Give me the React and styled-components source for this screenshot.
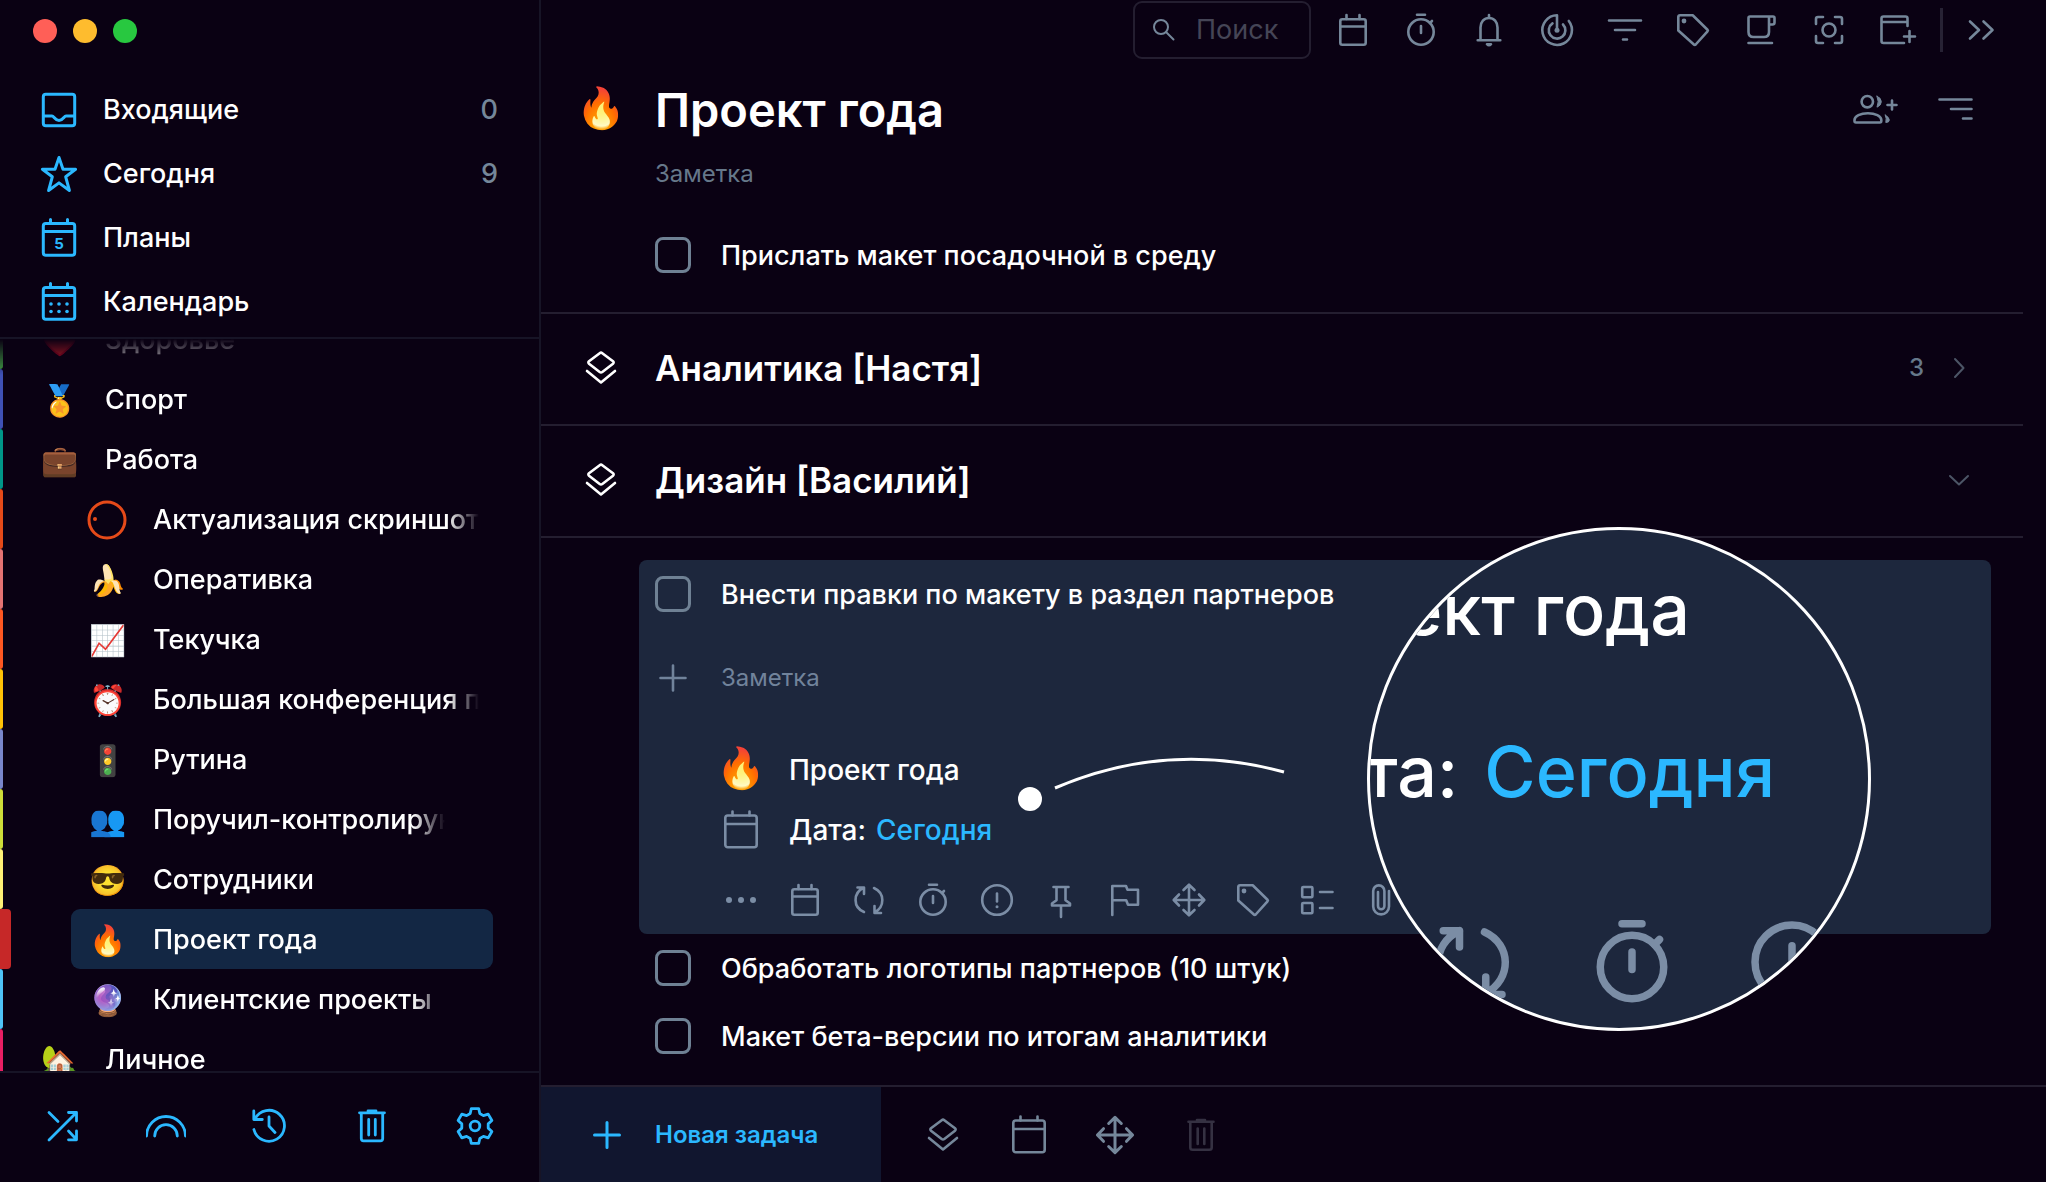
import { useState } from "react";
import styled, { createGlobalStyle } from "styled-components";

const navItems = [
  { icon: "inbox", label: "Входящие", count: 0 },
  { icon: "star", label: "Сегодня", count: 9 },
  { icon: "calendarDay", label: "Планы" },
  { icon: "calendarDots", label: "Календарь" },
];

const projects = [
  { name: "Здоровье", emoji: "♥️", color: "#43a047" },
  { name: "Спорт", emoji: "🏅", color: "#3f51b5" },
  { name: "Работа", emoji: "💼", color: "#009688" },
  { name: "Актуализация скриншотов", ring: true, color: "#e64a19", child: true },
  { name: "Оперативка", emoji: "🍌", color: "#e57373", child: true },
  { name: "Текучка", emoji: "📈", color: "#ff5722", child: true },
  { name: "Большая конференция по", emoji: "⏰", color: "#ffc107", child: true },
  { name: "Рутина", emoji: "🚦", color: "#7986cb", child: true },
  { name: "Поручил-контролирую", emoji: "👥", color: "#cddc39", child: true, short: true },
  { name: "Сотрудники", emoji: "😎", color: "#fff176", child: true },
  { name: "Проект года", emoji: "🔥", color: "#c62828", child: true },
  { name: "Клиентские проекты", emoji: "🔮", color: "#4fc3f7", child: true, short: true },
  { name: "Личное", emoji: "🏡", color: "#e91e63" },
];

const sideTools = [
  { icon: "shuffle", label: "Перемешать" },
  { icon: "rainbow", label: "Радуга" },
  { icon: "history", label: "История" },
  { icon: "trash", label: "Корзина" },
  { icon: "gear", label: "Настройки" },
];

const topTools = [
  { icon: "calendar", label: "Календарь" },
  { icon: "stopwatch", label: "Таймер" },
  { icon: "bell", label: "Напоминания" },
  { icon: "radar", label: "Радар" },
  { icon: "filter", label: "Фильтр" },
  { icon: "tag", label: "Теги" },
  { icon: "cup", label: "Перерыв" },
  { icon: "focus", label: "Фокус" },
  { icon: "windowPlus", label: "Новое окно" },
];

const taskTools = [
  { icon: "dots", label: "Ещё" },
  { icon: "calendar", label: "Дата" },
  { icon: "repeat", label: "Повтор" },
  { icon: "stopwatch", label: "Время" },
  { icon: "alert", label: "Важность" },
  { icon: "pin", label: "Закрепить" },
  { icon: "flag", label: "Флаг" },
  { icon: "move", label: "Переместить" },
  { icon: "tag", label: "Теги" },
  { icon: "checklist", label: "Список" },
  { icon: "clip", label: "Вложение" },
];

// six rounded teeth around the centre of a 40px box
const gearPath =
  "M" +
  Array.from({ length: 6 })
    .flatMap((_, i) =>
      [
        [17.8, -12],
        [17.8, 12],
        [13.4, 21],
        [13.4, 39],
      ].map(([r, a]) => {
        const rad = ((i * 60 + a - 90) * Math.PI) / 180;
        return `${(20 + r * Math.cos(rad)).toFixed(1)} ${(20 + r * Math.sin(rad)).toFixed(1)}`;
      }),
    )
    .join("L") +
  "Z";

const dot = { fill: "currentColor", stroke: "none" };

const icons = {
  inbox: (
    <>
      <rect x="4.3" y="4.3" width="31.4" height="31.4" rx="2.5" />
      <path d="M4.5 26H13c2 0 2.6 4.4 7 4.4s5-4.4 7-4.4h8.5" />
    </>
  ),
  star: <path d="M20 3.5L24 15.2H36.6L26.7 22.8L30.4 36.5L20 28.9L9.6 36.5L13.3 22.8L3.4 15.2H16Z" />,
  calendarDay: (
    <>
      <rect x="4.3" y="5.5" width="31.4" height="31.7" rx="2.5" />
      <path d="M11.5 1.5v4M28.5 1.5v4M4.5 13.5h31" />
      <text x="20" y="31" fontSize="15" fontWeight="700" textAnchor="middle" fill="currentColor" stroke="none">
        5
      </text>
    </>
  ),
  calendarDots: (
    <>
      <rect x="4.3" y="5.5" width="31.4" height="31.7" rx="2.5" />
      <path d="M11.5 1.5v4M28.5 1.5v4M4.5 13.5h31" />
      {[12, 20, 28].map((x) => (
        <g key={x} {...dot}>
          <circle cx={x} cy="22" r="1.8" />
          <circle cx={x} cy="29.5" r="1.8" />
        </g>
      ))}
    </>
  ),
  calendarLarge: (
    <>
      <rect x="4.3" y="5.5" width="31.4" height="31.7" rx="2.5" />
      <path d="M11.5 1.5v4M28.5 1.5v4M4.5 14h31" />
    </>
  ),
  calendar: (
    <>
      <rect x="7.3" y="9.3" width="25.4" height="25.4" rx="2" />
      <path d="M13.5 5v4M26.5 5v4M7.5 16.5h25" />
    </>
  ),
  stopwatch: (
    <>
      <circle cx="20" cy="22" r="12.7" />
      <path d="M16 4.7h8M20 16v7M29 13l2-2" />
    </>
  ),
  bell: (
    <>
      <path d="M8.7 30.3h22.6M11.5 30V17.5C11.5 12 15 8 20 8s8.5 4 8.5 9.5V30M20 8V5" />
      <path d="M18 34.2q2 2.2 4 0z" fill="currentColor" />
    </>
  ),
  radar: (
    <>
      <path d="M20 20.3V5.3A14.8 14.8 0 1 0 31.8 11" />
      <path d="M15.5 13.4A8.3 8.3 0 1 0 26 14.5" />
      <circle cx="20" cy="20.3" r="2.5" {...dot} />
    </>
  ),
  filter: <path d="M4 10.5h32M10 20h20M18 29.5h4" />,
  tag: (
    <>
      <path d="M7 5.3h12.7L34.5 19.8q.8.8 0 1.6L22.7 34.5q-.9.9-1.8 0L5.3 20.5V7q0-1.7 1.7-1.7z" />
      <circle cx="11" cy="11" r="2.4" {...dot} />
    </>
  ),
  cup: (
    <>
      <path d="M7.5 8q0-1.5 1.5-1.5h19V22q0 5-5 5H12.5q-5 0-5-5zM28 6.5h4q1.5 0 1.5 1.5v4.5q0 2-2 2H28M7.5 33h23.5" />
    </>
  ),
  focus: (
    <>
      <circle cx="20" cy="20" r="6.5" />
      <path d="M7 14V9q0-2 2-2h5M26 7h5q2 0 2 2v5M33 26v5q0 2-2 2h-5M14 33H9q-2 0-2-2v-5" />
    </>
  ),
  windowPlus: <path d="M30.5 16V8.5q0-2-2-2h-22q-2 0-2 2V31q0 2 2 2H27M4.5 12h26M32.5 21v11M27 26.5h11" />,
  forward: <path d="M9 11.5l9 8.5-9 8.5M22.5 11.5l9 8.5-9 8.5" />,
  search: (
    <>
      <circle cx="17" cy="17" r="7" />
      <path d="M22 22l7.5 7.5" />
    </>
  ),
  users: (
    <>
      <circle cx="16.3" cy="11.7" r="5.7" />
      <path d="M3.5 31v-1c0-4 6-6.8 13.4-6.8S30.3 26 30.3 30v1q0 1.5-1.5 1.5H5Q3.5 32.5 3.5 31zM41 10.5v9M36.5 15h9" />
      <path d="M26 6.2q4.3 1.8 4.3 5.5T26 17.2q2.4-5.5 0-11zM34.3 25q4 2.5 4 5t-3.5 2.5q1-4-.5-7.5z" fill="currentColor" strokeWidth="1" />
    </>
  ),
  sort: <path d="M4.5 9.5h32M16 19h20.5M28 28.5h8.5" />,
  stack: <path d="M18.7 5.2q1.3-1 2.6 0L32 13.3q1.3 1.2 0 2.4L21.3 24q-1.3 1-2.6 0L8 15.7q-1.3-1.2 0-2.4zM6 23l14 11.5L34 23" />,
  chevronRight: <path d="M16 11l8.5 9-8.5 9" />,
  chevronDown: <path d="M11 16l9 8.5 9-8.5" />,
  plus: <path d="M20 7.5v25M7.5 20h25" />,
  dots: (
    <g {...dot}>
      <circle cx="8" cy="20" r="3" />
      <circle cx="20" cy="20" r="3" />
      <circle cx="32" cy="20" r="3" />
    </g>
  ),
  repeat: <path d="M8.5 7.5H15V14M15 7.5C3.5 13 4 27.5 15 32M25 8C36 13 36 27 25.5 32.5M25.5 26v7H32" />,
  alert: (
    <>
      <circle cx="20" cy="20" r="14.8" />
      <path d="M20 13.5v8" />
      <circle cx="20" cy="26.7" r="1.5" {...dot} />
    </>
  ),
  pin: <path d="M12.5 7h15M15.5 7.5v12.7L11 23.5v2h18v-2l-4.5-3.3V7.5M20 26v11" />,
  flag: <path d="M7.3 35V6H21l1.5 3.8H33v15H23l-1.8-4.5H7.3" />,
  move: <path d="M20 5v30M5 20h30M14.5 10L20 4.7l5.5 5.3M14.5 30l5.5 5.3L25.5 30M10 14.5L4.7 20l5.3 5.5M30 14.5l5.3 5.5L30 25.5" />,
  checklist: (
    <>
      <rect x="5.2" y="7" width="10.2" height="10.2" rx="1" />
      <rect x="5.2" y="23" width="10.2" height="10.2" rx="1" />
      <path d="M23 12h12.5M23 28h12.5" />
    </>
  ),
  clip: <path d="M28 11v15.5a7.900 7.900 0 0 1-15.8 0V11a5.600 5.600 0 0 1 11.2 0v15a3.200 3.200 0 0 1-6.4 0V12" />,
  shuffle: <path d="M6 34L33.5 6.5M25.5 6.5h8V15M6 6.5L15 15.5M25.5 25l8 8.5M25.5 33.8h8V25" />,
  rainbow: <path d="M.5 30a19.5 19.5 0 0 1 39 0M8.7 30a11.3 11.3 0 0 1 22.6 0" />,
  history: <path d="M4.8 5v8.5h8.5M6 13A15.5 15.5 0 1 1 4.9 23.5M20 11v9l6 6.5" />,
  trash: <path d="M7.5 6.8h25M16 5h8M9.3 7v25.5q0 2.3 2.3 2.3h16.8q2.3 0 2.3-2.3V7M16.7 13.5v15.5M23.3 13.5v15.5" />,
  gear: (
    <>
      <path d={gearPath} />
      <circle cx="20" cy="20" r="4.8" />
    </>
  ),
};

function Icon({ name, size = 40, wide = 40, stroke = 2.6 }) {
  return (
    <IconSvg
      width={(size * wide) / 40}
      height={size}
      viewBox={`0 0 ${wide} 40`}
      strokeWidth={stroke}
      aria-hidden="true"
    >
      {icons[name]}
    </IconSvg>
  );
}

function Task({ id, title }) {
  return (
    <TaskRow>
      <Checkbox type="checkbox" id={id} />
      <label htmlFor={id}>{title}</label>
    </TaskRow>
  );
}

function App() {
  const [active, setActive] = useState("Проект года");
  const [query, setQuery] = useState("");

  return (
    <Window>
      <GlobalStyle />
      <Sidebar>
        <Lights>
          <Light $color="#ff5f57" />
          <Light $color="#febc2e" />
          <Light $color="#28c840" />
        </Lights>
        <Nav>
          {navItems.map((item) => (
            <NavLink href="#" key={item.label}>
              <Icon name={item.icon} stroke={3} />
              <NavLabel>{item.label}</NavLabel>
              {item.count !== undefined && <Count>{item.count}</Count>}
            </NavLink>
          ))}
        </Nav>
        <ProjectScroll>
          <ProjectList>
            {projects.map((p) => (
              <ProjectItem key={p.name}>
                <ColorBar $color={p.color} $active={p.name === active} />
                <ProjectButton
                  $child={p.child}
                  $active={p.name === active}
                  onClick={() => setActive(p.name)}
                >
                  {p.ring ? (
                    <Ring viewBox="0 0 40 40">
                      <circle cx="20" cy="20" r="18" fill="none" stroke="#e64a19" strokeWidth="3" />
                      <circle cx="8" cy="19" r="2" fill="#e64a19" />
                    </Ring>
                  ) : (
                    <Emoji>{p.emoji}</Emoji>
                  )}
                  <ProjectName $short={p.short}>{p.name}</ProjectName>
                </ProjectButton>
              </ProjectItem>
            ))}
          </ProjectList>
        </ProjectScroll>
        <SideFooter>
          {sideTools.map((t) => (
            <IconButton key={t.icon} aria-label={t.label} $color="#2bb8ff">
              <Icon name={t.icon} stroke={2.8} />
            </IconButton>
          ))}
        </SideFooter>
      </Sidebar>

      <Main>
        <Toolbar>
          <SearchBox>
            <Icon name="search" stroke={2} />
            <SearchInput
              aria-label="Поиск"
              placeholder="Поиск"
              value={query}
              onChange={(e) => setQuery(e.target.value)}
            />
          </SearchBox>
          <TopTools>
            {topTools.map((t) => (
              <IconButton key={t.icon} aria-label={t.label}>
                <Icon name={t.icon} />
              </IconButton>
            ))}
          </TopTools>
          <Separator />
          <IconButton aria-label="Развернуть">
            <Icon name="forward" />
          </IconButton>
        </Toolbar>

        <Content>
          <Header>
            <Lead>
              <Emoji $large>🔥</Emoji>
            </Lead>
            <Title>Проект года</Title>
            <HeaderTools>
              <IconButton aria-label="Участники">
                <Icon name="users" wide={48} />
              </IconButton>
              <IconButton aria-label="Сортировка">
                <Icon name="sort" />
              </IconButton>
            </HeaderTools>
          </Header>
          <HeaderNote>Заметка</HeaderNote>
          <TopTasks>
            <Task id="task-landing" title="Прислать макет посадочной в среду" />
          </TopTasks>

          <Section>
            <Lead>
              <Icon name="stack" />
            </Lead>
            <SectionTitle>Аналитика [Настя]</SectionTitle>
            <SectionCount>3</SectionCount>
            <IconButton aria-label="Раскрыть раздел" $color="#4c5566">
              <Icon name="chevronRight" stroke={2} />
            </IconButton>
          </Section>
          <Section $last>
            <Lead>
              <Icon name="stack" />
            </Lead>
            <SectionTitle>Дизайн [Василий]</SectionTitle>
            <IconButton aria-label="Свернуть раздел" $color="#4c5566">
              <Icon name="chevronDown" stroke={2} />
            </IconButton>
          </Section>

          <Card>
            <Task id="task-partners" title="Внести правки по макету в раздел партнеров" />
            <CardNote>
              <Icon name="plus" />
              <span>Заметка</span>
            </CardNote>
            <Details>
              <Detail>
                <Emoji $large>🔥</Emoji>
                <span>Проект года</span>
              </Detail>
              <Detail>
                <Icon name="calendarLarge" />
                <DateText>
                  Дата: <Accent href="#">Сегодня</Accent>
                </DateText>
              </Detail>
            </Details>
            <TaskTools>
              {taskTools.map((t) => (
                <IconButton key={t.icon} aria-label={t.label} $color="#7b8da5">
                  <Icon name={t.icon} />
                </IconButton>
              ))}
            </TaskTools>

            <Pointer viewBox="0 0 270 60" aria-hidden="true">
              <circle cx="12" cy="44" r="12" fill="#fff" />
              <path d="M37 33Q149-15 266 17" fill="none" stroke="#fff" strokeWidth="3" />
            </Pointer>
            <Lens aria-hidden="true">
              <LensRow $width="320px">
                <span>ект года</span>
              </LensRow>
              <LensRow $width="405px">
                <span>та:</span>
                <LensAccent>Сегодня</LensAccent>
              </LensRow>
              <LensIcons>
                <Icon name="repeat" size={100} stroke={3} />
                <Icon name="stopwatch" size={100} stroke={3} />
                <Icon name="alert" size={100} stroke={3} />
              </LensIcons>
            </Lens>
          </Card>
          <CardTasks>
            <Task id="task-logos" title="Обработать логотипы партнеров (10 штук)" />
            <Task id="task-beta" title="Макет бета-версии по итогам аналитики" />
          </CardTasks>
        </Content>

        <BottomBar>
          <NewTask>
            <Icon name="plus" stroke={3} />
            <span>Новая задача</span>
          </NewTask>
          <BottomTools>
            <IconButton aria-label="Добавить раздел">
              <Icon name="stack" />
            </IconButton>
            <IconButton aria-label="Запланировать">
              <Icon name="calendarLarge" />
            </IconButton>
            <IconButton aria-label="Переместить">
              <Icon name="move" size={46} />
            </IconButton>
            <IconButton aria-label="Удалить" $color="#353142" disabled>
              <Icon name="trash" />
            </IconButton>
          </BottomTools>
        </BottomBar>
      </Main>
    </Window>
  );
}

export default App;

const GlobalStyle = createGlobalStyle`
  * {
    box-sizing: border-box;
  }

  body {
    margin: 0;
    background-color: #0a0113;
    color: #fff;
    font-family: Inter, sans-serif;
    font-size: 27px;
    font-weight: 500;
    line-height: 36px;
  }

  button, input {
    font: inherit;
  }

  a {
    text-decoration: none;
  }
`;

const Window = styled.div`
  display: flex;
  height: 100vh;
  overflow: hidden;
`;

const IconSvg = styled.svg`
  display: block;
  flex: none;
  fill: none;
  stroke: currentColor;
  stroke-linecap: round;
  stroke-linejoin: round;
`;

const IconButton = styled.button`
  display: flex;
  align-items: center;
  justify-content: center;
  min-width: 40px;
  height: 40px;
  padding: 0;
  border: none;
  background: none;
  color: ${(p) => p.$color || "#75879a"};
  cursor: pointer;
`;

const Emoji = styled.span`
  flex: none;
  display: flex;
  align-items: center;
  justify-content: center;
  width: 40px;
  padding-bottom: ${(p) => (p.$large ? "4px" : "0")};
  font-size: ${(p) => (p.$large ? "40px" : "30px")};
  line-height: 48px;
`;

/* sidebar */

const Sidebar = styled.aside`
  flex: none;
  display: flex;
  flex-direction: column;
  width: 541px;
  border-right: 2px solid #171426;
`;

const Lights = styled.div`
  display: flex;
  gap: 16px;
  padding: 19px 33px 35px;
`;

const Light = styled.span`
  width: 24px;
  height: 24px;
  border-radius: 50%;
  background-color: ${(p) => p.$color};
`;

const Nav = styled.nav`
  padding-bottom: 3px;
  border-bottom: 2px solid #171426;
`;

const NavLink = styled.a`
  display: flex;
  align-items: center;
  gap: 24px;
  height: 64px;
  padding: 0 41px 0 39px;
  color: #2bb8ff;
`;

const NavLabel = styled.span`
  flex: 1;
  color: #fff;
`;

const Count = styled.span`
  color: #75879a;
`;

const ProjectScroll = styled.div`
  flex: 1;
  min-height: 0;
  overflow: hidden;
  mask-image: linear-gradient(to bottom, transparent, #000 36px);
`;

const ProjectList = styled.ul`
  margin: -30px 0 0;
  padding: 0;
  list-style: none;
`;

const ProjectItem = styled.li`
  display: flex;
  height: 60px;
`;

const ColorBar = styled.span`
  width: ${(p) => (p.$active ? "11px" : "3px")};
  margin-right: ${(p) => (p.$active ? "0" : "8px")};
  border-radius: 0 4px 4px 0;
  background-color: ${(p) => p.$color};
`;

const ProjectButton = styled.button`
  flex: 1;
  min-width: 0;
  display: flex;
  align-items: center;
  gap: 26px;
  margin: 0 46px 0 ${(p) => (p.$child ? "60px" : "12px")};
  padding: 2px 14px 0 16px;
  border: none;
  border-radius: 9px;
  background-color: ${(p) => (p.$active ? "#132744" : "transparent")};
  color: #fff;
  cursor: pointer;
`;

const ProjectName = styled.span`
  overflow: hidden;
  max-width: ${(p) => (p.$short ? "292px" : "none")};
  padding-right: 34px;
  white-space: nowrap;
  mask-image: linear-gradient(to left, transparent, #000 32px);
`;

const Ring = styled.svg`
  flex: none;
  width: 40px;
  height: 40px;
`;

const SideFooter = styled.div`
  display: flex;
  align-items: center;
  justify-content: space-between;
  height: 111px;
  padding: 0 44px 4px 43px;
  border-top: 2px solid #171426;
`;

/* main column */

const Main = styled.main`
  flex: 1;
  min-width: 0;
  display: flex;
  flex-direction: column;
`;

const Toolbar = styled.div`
  display: flex;
  align-items: center;
  justify-content: flex-end;
  height: 60px;
  padding-right: 45px;
`;

const SearchBox = styled.div`
  display: flex;
  align-items: center;
  width: 178px;
  height: 58px;
  margin-right: 22px;
  padding-left: 9px;
  border: 2px solid #241e30;
  border-radius: 9px;
  color: #75879a;
`;

const SearchInput = styled.input`
  width: 110px;
  padding: 0 0 0 12px;
  border: none;
  outline: none;
  background: none;
  color: #fff;
  font-weight: 400;

  &::placeholder {
    color: #454556;
    opacity: 1;
  }
`;

const TopTools = styled.div`
  display: flex;
  gap: 28px;
`;

const Separator = styled.span`
  width: 3px;
  height: 44px;
  margin: 0 18px 0 23px;
  background-color: #272234;
`;

const Content = styled.div`
  flex: 1;
  min-height: 0;
`;

const Lead = styled.div`
  flex: none;
  width: 114px;
  padding-left: 40px;
`;

const Header = styled.header`
  display: flex;
  align-items: center;
  height: 100px;
  padding-right: 71px;
`;

const Title = styled.h1`
  flex: 1;
  margin: 0;
  font-size: 47px;
  font-weight: 600;
  line-height: 60px;
`;

const HeaderTools = styled.div`
  display: flex;
  gap: 36px;
`;

const HeaderNote = styled.div`
  height: 61px;
  padding: 0 114px;
  color: #66788a;
  font-size: 24px;
  font-weight: 400;
  line-height: 28px;
`;

const TopTasks = styled.div`
  padding: 0 114px 23px;
`;

const TaskRow = styled.div`
  display: flex;
  align-items: center;
  gap: 30px;
  height: 68px;

  & > label {
    padding-top: 2px;
  }
`;

const Checkbox = styled.input`
  appearance: none;
  flex: none;
  width: 36px;
  height: 36px;
  margin: 0;
  border: 3px solid #6f8194;
  border-radius: 8px;
`;

const Section = styled.section`
  display: flex;
  align-items: center;
  height: ${(p) => (p.$last ? "114px" : "112px")};
  margin-right: 23px;
  padding: 0 44px 2px 0;
  border-top: 2px solid #241e30;
  border-bottom: ${(p) => (p.$last ? "2px solid #241e30" : "none")};
`;

const SectionTitle = styled.h2`
  flex: 1;
  margin: 0;
  font-size: 35px;
  font-weight: 600;
  line-height: 44px;
`;

const SectionCount = styled.span`
  margin-right: 15px;
  color: #66788a;
  font-size: 24px;
`;

const Card = styled.article`
  position: relative;
  z-index: 1;
  margin: 22px 55px 0 98px;
  padding: 0 16px;
  border-radius: 8px;
  background-color: #1d273d;
`;

const CardNote = styled.div`
  display: flex;
  align-items: center;
  gap: 28px;
  height: 60px;
  margin: 20px 0 0 -2px;
  color: #71839b;
  font-size: 24px;
  font-weight: 400;
`;

const Details = styled.div`
  margin: 32px 66px 6px;
`;

const Detail = styled.div`
  display: flex;
  align-items: center;
  gap: 28px;
  height: 60px;
  color: #7b8da5;
  font-size: 28px;

  & > span:last-child {
    color: #fff;
  }
`;

const DateText = styled.span`
  display: flex;
  gap: 10px;
`;

const Accent = styled.a`
  color: #2bb8ff;
`;

const TaskTools = styled.div`
  display: flex;
  align-items: center;
  gap: 24px;
  height: 68px;
  padding-left: 66px;
`;

/* callout drawn over the card */

const Pointer = styled.svg`
  position: absolute;
  top: 195px;
  left: 379px;
  width: 270px;
  height: 60px;
`;

const Lens = styled.div`
  position: absolute;
  top: -33px;
  left: 728px;
  width: 504px;
  height: 504px;
  padding-top: 30px;
  overflow: hidden;
  border: 3px solid #fff;
  border-radius: 50%;
  background-color: #1d273d;
  font-size: 70px;
  line-height: 100px;
`;

const LensRow = styled.div`
  display: flex;
  justify-content: flex-end;
  gap: 26px;
  width: ${(p) => p.$width};
  margin-bottom: 62px;
  white-space: nowrap;
`;

const LensAccent = styled.span`
  color: #2bb8ff;
`;

const LensIcons = styled.div`
  display: flex;
  gap: 60px;
  margin-top: 90px;
  padding-left: 52px;
  color: #7b8da5;
`;

const CardTasks = styled.div`
  padding: 0 114px;
`;

const BottomBar = styled.footer`
  display: flex;
  height: 97px;
  border-top: 2px solid #241e30;
`;

const NewTask = styled.button`
  display: flex;
  align-items: center;
  gap: 28px;
  width: 340px;
  padding: 0 46px;
  border: none;
  background-color: #11162f;
  color: #2bb8ff;
  font-size: 24px;
  font-weight: 600;
  cursor: pointer;
`;

const BottomTools = styled.div`
  display: flex;
  align-items: center;
  gap: 40px;
  padding-left: 39px;

  & > button {
    min-width: 46px;
  }
`;
